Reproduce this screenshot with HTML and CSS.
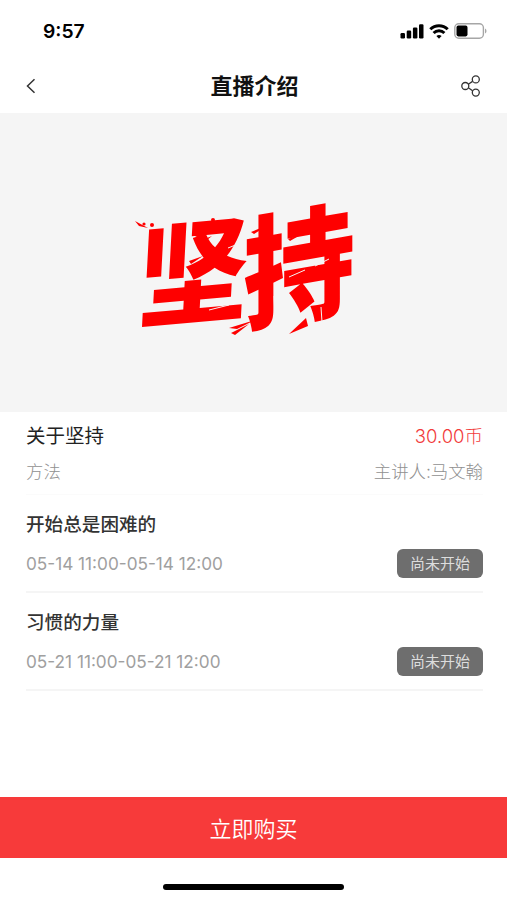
FILE: index.html
```
<!DOCTYPE html>
<html lang="zh-CN">
  <head>
    <meta charset="UTF-8" />
    <meta name="viewport" content="width=device-width, initial-scale=1.0" />
    <title>直播介绍</title>
    <link rel="stylesheet" href="styles.css">
  </head>
  <body>
    <div class="page">
      <div class="status-bar">
        <span class="time">9:57</span>
        <div class="status-icons">
          <svg width="24" height="15" viewBox="0 0 24 15">
            <rect x="0.5" y="9" width="4.5" height="5.5" rx="1.2" />
            <rect x="6.7" y="6.5" width="4.5" height="8" rx="1.2" />
            <rect x="12.9" y="3.5" width="4.5" height="11" rx="1.2" />
            <rect x="19" y="0.3" width="4.5" height="14.2" rx="1.2" />
          </svg>
          <svg class="wifi" width="20" height="15" viewBox="0 0 20 15">
            <path d="M1.3 5.3a12.4 12.4 0 0 1 17.4 0" />
            <path d="M4.6 9a7.7 7.7 0 0 1 10.8 0" />
            <path class="dot" d="M7.4 12a4 4 0 0 1 5.2 0L10 14.7z" />
          </svg>
          <svg class="battery" width="33" height="16" viewBox="0 0 33 16">
            <rect class="shell" x="0.8" y="0.8" width="28.6" height="14.4" rx="4" />
            <rect x="2.5" y="2.6" width="11" height="10.8" rx="1.8" />
            <path class="cap" d="M31 5.5a2.8 2.8 0 0 1 0 5z" />
          </svg>
        </div>
      </div>

      <div class="nav">
        <svg class="back" width="10" height="16" viewBox="0 0 10 16">
          <path d="M8.5 1.2L1.5 8l7 6.8" />
        </svg>
        <h1>直播介绍</h1>
        <svg class="share" width="20" height="22" viewBox="0 0 20 22">
          <path d="M7.3 9.2l4.3-2.8M7.3 12.8l4.3 2.9" />
          <circle cx="4.3" cy="11" r="3.5" />
          <circle cx="14.8" cy="4.4" r="3.5" />
          <circle cx="14.8" cy="17.6" r="3.5" />
        </svg>
      </div>

      <div class="cover">
        <div class="brush"><span class="first">坚</span><span class="second">持</span></div>
        <!-- ink splatter and dry brush streaks -->
        <svg class="ink" width="230" height="150" viewBox="0 0 230 150">
          <circle cx="13" cy="29" r="1.6" />
          <circle cx="21" cy="30" r="2" />
          <circle cx="53" cy="35" r="1.5" />
          <circle cx="82" cy="25" r="2" />
          <path d="M4 26l13 7-9-2zM62 40l20-9-14 12zM66 47l15-6-10 8z" />
          <path d="M98 133l26-8-18 9zM100 138l18-9-14 11zM58 66l14-5-12 8z" />
          <path d="M120 37l19-8-16 10zM157 44l14-5-12 7zM158 139l17-16 2 8z" />
          <path class="gap" d="M97 53l10-4M78 115l20-5M143 101l1 20M184 71l14-7M190 112l1 15M158 82l16-7" />
        </svg>
      </div>

      <div class="content">
        <div class="intro">
          <div class="row">
            <h2>关于坚持</h2>
            <span class="price">30.00币</span>
          </div>
          <div class="row sub">
            <span>方法</span>
            <span>主讲人:马文翰</span>
          </div>
        </div>

        <div class="lesson">
          <h3>开始总是困难的</h3>
          <div class="row">
            <span class="date">05-14 11:00-05-14 12:00</span>
            <span class="badge">尚未开始</span>
          </div>
        </div>

        <div class="lesson">
          <h3>习惯的力量</h3>
          <div class="row">
            <span class="date">05-21 11:00-05-21 12:00</span>
            <span class="badge">尚未开始</span>
          </div>
        </div>
      </div>

      <button class="buy">立即购买</button>
      <div class="home-bar"></div>
    </div>
  </body>
</html>
```
FILE: styles.css
```
* {
  margin: 0;
  padding: 0;
  box-sizing: border-box;
}

body {
  background: white;
  font-family: "Inter", "Noto Sans CJK SC", sans-serif;
}

.page {
  display: flex;
  flex-direction: column;
  height: 900px;
  overflow: hidden;
}

.status-bar {
  display: flex;
  justify-content: space-between;
  align-items: center;
  height: 62px;
  padding: 0 20px 0 43px;
}

.time {
  font-size: 19.3px;
  font-weight: 600;
}

.status-icons {
  display: flex;
  align-items: center;
  gap: 5px;
}

.wifi path {
  fill: none;
  stroke: black;
  stroke-width: 3;
}

.wifi .dot {
  fill: black;
  stroke: none;
}

.battery .shell {
  fill: none;
  stroke: #a6a6a6;
  stroke-width: 1.4;
}

.battery .cap {
  fill: #a6a6a6;
}

.nav {
  display: grid;
  grid-template-columns: 1fr auto 1fr;
  align-items: center;
  height: 51px;
  padding: 0 26px 3px;
}

.nav h1 {
  padding-left: 2px;
  font-size: 22px;
  line-height: 30px;
  font-weight: 600;
  color: #111;
}

.back,
.share {
  fill: none;
  stroke: #333;
  stroke-width: 1.5;
}

.share {
  justify-self: end;
  stroke-width: 1.3;
}

.cover {
  position: relative;
  display: flex;
  justify-content: center;
  align-items: center;
  height: 299px;
  background: #f5f5f5;
}

.brush {
  display: flex;
  color: #fe0000;
  font-family: "Noto Sans CJK SC", sans-serif;
  font-size: 112px;
  font-weight: 900;
  line-height: 1;
}

.brush span {
  display: block;
}

.first {
  transform: translate(-4px, 2px) skewY(-5deg) skewX(-3deg);
}

.second {
  transform: translate(-11px, -4px) skewY(-10deg) scaleY(1.1);
}

.ink {
  position: absolute;
  top: 82px;
  left: 131px;
  fill: #fe0000;
}

.ink .gap {
  fill: none;
  stroke: #f5f5f5;
  stroke-width: 1;
}

.content {
  flex: 1;
  padding: 0 24px 0 26px;
}

.row {
  display: flex;
  justify-content: space-between;
  align-items: center;
}

.intro {
  height: 83px;
  padding-top: 10px;
  border-bottom: 1px solid #fbfbfb;
}

.intro h2 {
  font-size: 19.5px;
  line-height: 28px;
  font-weight: 400;
  color: #222;
}

.price {
  font-size: 18.5px;
  font-weight: 300;
  line-height: 28px;
  color: #f23c3c;
}

.sub {
  margin-top: 9px;
  font-size: 17.4px;
  font-weight: 300;
  line-height: 25px;
  color: #909090;
}

.lesson {
  height: 98px;
  padding-top: 16px;
  border-bottom: 2px solid #f5f5f5;
}

.lesson h3 {
  font-size: 18.6px;
  line-height: 27px;
  font-weight: 500;
  color: #333;
}

.lesson .row {
  margin-top: 11px;
}

.date {
  font-size: 17.2px;
  line-height: 27px;
  padding-bottom: 1px;
  color: #a0a0a0;
}

.badge {
  width: 86px;
  height: 29px;
  border-radius: 6px;
  background: #6e6e6e;
  color: #ddd;
  font-size: 15px;
  line-height: 29px;
  text-align: center;
}

.buy {
  height: 61px;
  padding-bottom: 2px;
  border: none;
  background: #f73a3a;
  color: white;
  font-family: inherit;
  font-size: 22px;
  font-weight: 350;
}

.home-bar {
  width: 181px;
  height: 6px;
  margin: 26px auto 10px;
  border-radius: 3px;
  background: black;
}
```
